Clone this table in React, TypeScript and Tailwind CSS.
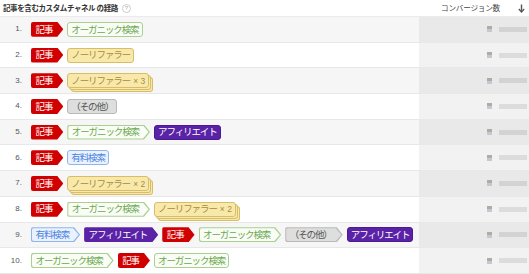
import React from "react";

type Kind = "red" | "green" | "yellow" | "grey" | "blue" | "purple";

type Step = { kind: Kind; label: string; count?: number };

const R: Step = { kind: "red", label: "記事" };
const G: Step = { kind: "green", label: "オーガニック検索" };
const Y: Step = { kind: "yellow", label: "ノーリファラー" };
const O: Step = { kind: "grey", label: "（その他）" };
const B: Step = { kind: "blue", label: "有料検索" };
const P: Step = { kind: "purple", label: "アフィリエイト" };

const paths: Step[][] = [
  [R, G],
  [R, Y],
  [R, { ...Y, count: 3 }],
  [R, O],
  [R, G, P],
  [R, B],
  [R, { ...Y, count: 2 }],
  [R, G, { ...Y, count: 2 }],
  [B, P, R, G, O, P],
  [G, R, G],
];

const styles: Record<Kind, { fill: string; line: string; text: string; box: string }> = {
  red: { fill: "bg-[#d10000]", line: "bg-[#d10000]", text: "text-white", box: "bg-[#d10000] border-[#d10000]" },
  purple: { fill: "bg-[#5a22a6]", line: "bg-[#5a22a6]", text: "text-white", box: "bg-[#5a22a6] border-[#4a1a90]" },
  green: { fill: "bg-[#fafdf6]", line: "bg-[#a9d08e]", text: "text-[#6aa84f]", box: "bg-[#fafdf6] border-[#a9d08e]" },
  yellow: { fill: "bg-[#f8e9ab]", line: "bg-[#d8bd68]", text: "text-[#a88c3c]", box: "bg-[#f8e9ab] border-[#d8bd68]" },
  grey: { fill: "bg-[#dedede]", line: "bg-[#b9b9b9]", text: "text-[#555555]", box: "bg-[#dedede] border-[#b9b9b9]" },
  blue: { fill: "bg-[#eaf2ff]", line: "bg-[#8fb5ef]", text: "text-[#4a82dd]", box: "bg-[#eaf2ff] border-[#8fb5ef]" },
};

function Label({ step }: { step: Step }) {
  return (
    <span className="whitespace-nowrap">
      {step.label}
      {step.count ? (
        <span className="ml-[3px] tracking-normal text-[8.5px] font-['Liberation_Sans',sans-serif]">
          × {step.count}
        </span>
      ) : null}
    </span>
  );
}

function Badge({ step, arrow }: { step: Step; arrow: boolean }) {
  const s = styles[step.kind];
  if (arrow) {
    return (
      <div
        className={`h-[15px] p-[1px] pr-[1.5px] rounded-l-[2px] ${s.line} [clip-path:polygon(0_0,calc(100%_-_6px)_0,100%_50%,calc(100%_-_6px)_100%,0_100%)]`}
      >
        <div
          className={`h-full flex items-center pl-[3.5px] pr-[9.5px] rounded-l-[2px] ${s.fill} ${s.text} [clip-path:polygon(0_0,calc(100%_-_5.5px)_0,100%_50%,calc(100%_-_5.5px)_100%,0_100%)]`}
        >
          <Label step={step} />
        </div>
      </div>
    );
  }
  const stack =
    step.count === 3
      ? "shadow-[2px_2px_0_-1px_#f8e9ab,2px_2px_0_0_#d8bd68,4px_4px_0_-1px_#f8e9ab,4px_4px_0_0_#d8bd68]"
      : step.count === 2
      ? "shadow-[2px_2px_0_-1px_#f8e9ab,2px_2px_0_0_#d8bd68,4px_4px_0_-1px_#f8e9ab,4px_4px_0_0_#d8bd68]"
      : "";
  return (
    <div
      className={`h-[15px] flex items-center px-[3px] border rounded-[3px] ${s.box} ${s.text} ${stack}`}
    >
      <Label step={step} />
    </div>
  );
}

function Blurred({ odd }: { odd: boolean }) {
  return (
    <div className="flex items-center gap-[7px] pr-[2px] blur-[0.6px]">
      <span className="flex flex-col">
        <span className="w-[5px] h-[3px] bg-[#b3aaa2]" />
        <span className="w-[5px] h-[3px] bg-[#c3c9d4]" />
      </span>
      <span className={`w-[28px] h-[5px] ${odd ? "bg-[#d3d3d3]" : "bg-[#dcdcdc]"}`} />
    </div>
  );
}

export default function App() {
  return (
    <div className="w-[529px] h-[274px] overflow-hidden bg-white font-['Noto_Sans_CJK_JP','Liberation_Sans',sans-serif]">
      <div className="flex h-[17px] border-b border-[#ebebeb]">
        <div className="flex-1 flex items-center pl-[3px] gap-[4px]">
          <span className="text-[7.5px] font-bold tracking-[-0.4px] text-[#333333] leading-none">
            記事を含むカスタムチャネル の経路
          </span>
          <span className="w-[9px] h-[9px] rounded-full border border-[#cccccc] flex items-center justify-center text-[6px] leading-none text-[#aaaaaa] font-['Liberation_Sans',sans-serif]">
            ?
          </span>
        </div>
        <div className="w-[110px] flex items-center justify-end pr-[4px]">
          <span className="text-[7.6px] tracking-[-0.2px] text-[#444444] leading-none">コンバージョン数</span>
          <svg width="7" height="9" viewBox="0 0 7 9" className="ml-[18px]">
            <path d="M3.5 0.5V7.5" stroke="#555555" strokeWidth="1.4" />
            <path d="M0.8 5L3.5 8L6.2 5" stroke="#555555" strokeWidth="1.2" fill="none" />
          </svg>
        </div>
      </div>
      {paths.map((steps, i) => {
        const odd = i % 2 === 0;
        return (
          <div key={i} className="flex h-[25.7px] border-b border-[#e8e8e8]">
            <div className={`flex-1 flex items-center ${odd ? "bg-[#f6f6f6]" : "bg-white"}`}>
              <span className="w-[22px] text-right text-[8px] text-[#555555] font-['Liberation_Sans',sans-serif]">
                {i + 1}.
              </span>
              <div className="flex items-center gap-[4px] pl-[9px] text-[9.5px] tracking-[-1.1px] leading-none">
                {steps.map((st, j) => (
                  <Badge key={j} step={st} arrow={j < steps.length - 1} />
                ))}
              </div>
            </div>
            <div className={`w-[110px] flex items-center justify-end ${odd ? "bg-[#e9e9e9]" : "bg-[#f2f2f2]"}`}>
              <Blurred odd={odd} />
            </div>
          </div>
        );
      })}
    </div>
  );
}
